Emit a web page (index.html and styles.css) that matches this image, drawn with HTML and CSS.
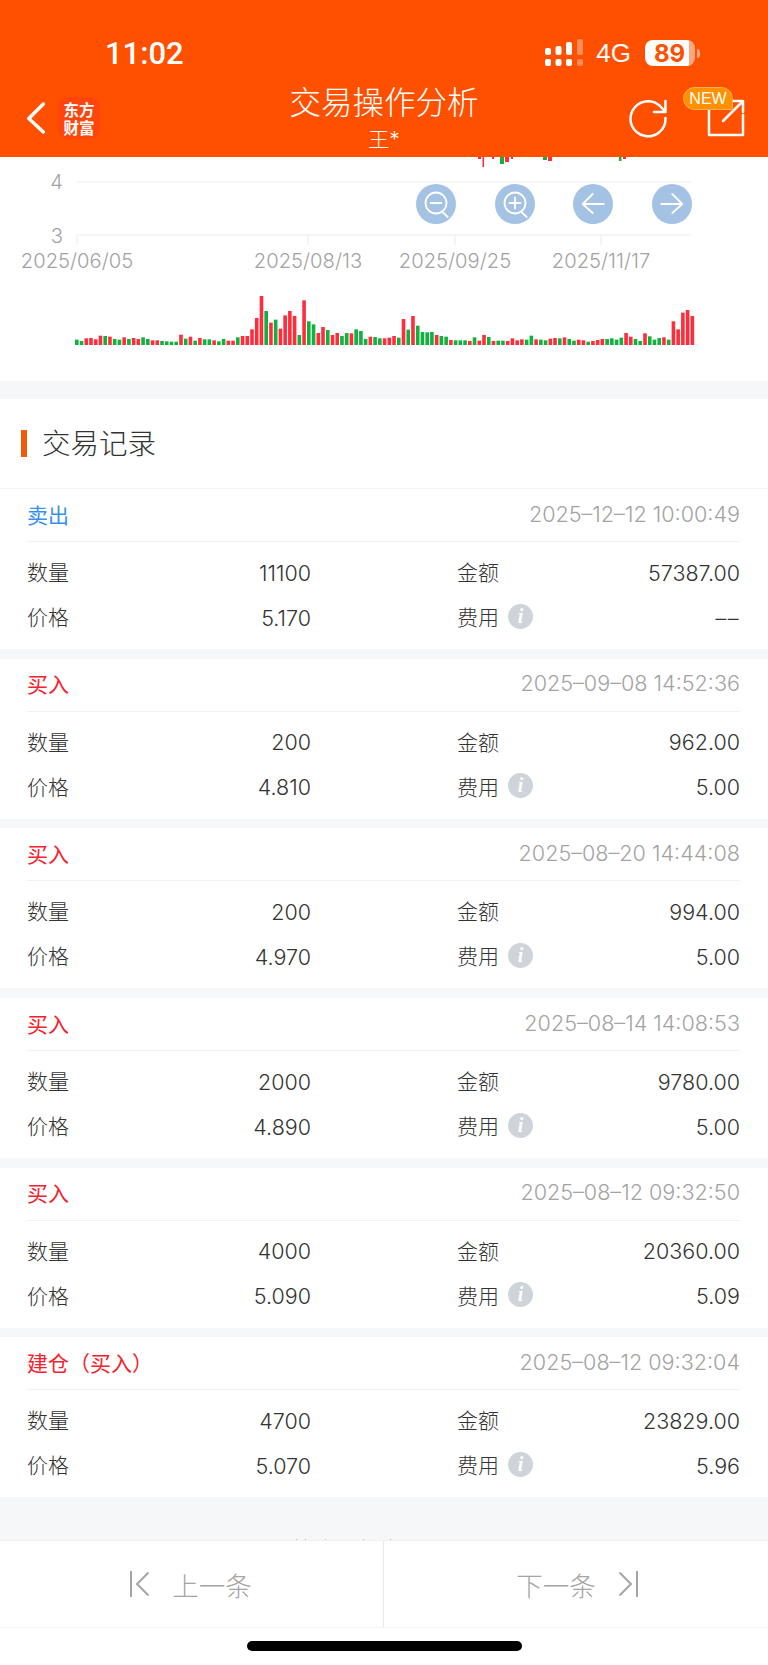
FILE: index.html
```html
<!DOCTYPE html>
<html>
	<head>
		<meta charset="UTF-8">
		<title>交易操作分析</title>
		<link rel="stylesheet" href="styles.css">
	</head>
	<body>
		<div class="page">
			<header class="header">
				<div class="status">
					<span class="time">11:02</span>
					<div class="status-right">
						<svg class="signal" width="40" height="28" viewBox="0 0 40 28">
							<rect x="1" y="20" width="6" height="7" rx="2"/>
							<rect x="11.5" y="20" width="6" height="7" rx="2"/>
							<rect x="22" y="20" width="6" height="7" rx="2"/>
							<rect class="dim" x="33" y="20" width="6" height="7" rx="2"/>
							<rect x="1" y="9" width="6" height="7" rx="2"/>
							<rect x="11.5" y="7" width="6" height="9" rx="2"/>
							<rect x="22" y="3" width="6" height="13" rx="2"/>
							<rect class="dim" x="33" y="0" width="6" height="16" rx="2"/>
						</svg>
						<span class="net">4G</span>
						<div class="battery"><span class="battery-num">89</span></div>
						<span class="battery-tip"></span>
					</div>
				</div>
				<div class="nav">
					<div class="nav-left">
						<svg class="back" width="18" height="32" viewBox="0 0 18 32">
							<path d="M16.300 2 L1.800 16.500 L16.300 30"/>
						</svg>
						<div class="logo">东方财富</div>
					</div>
					<div class="nav-title">
						<div class="title">交易操作分析</div>
						<div class="subtitle">王*</div>
					</div>
					<div class="nav-right">
						<svg class="nav-icon" width="40" height="40" viewBox="0 0 40 40">
							<path d="M37.500 20 A17.500 17.500 0 1 1 32 8 L37.500 14 M26 14 H37.500 V3"/>
						</svg>
						<div class="share">
							<svg class="nav-icon" width="42" height="40" viewBox="0 0 42 40">
								<path d="M38 17 V37 H4 V3 H25 M18 23 L38 3 M27 3 H38 V14"/>
							</svg>
							<span class="new">NEW</span>
						</div>
					</div>
				</div>
			</header>

			<main class="main">
				<section class="chart">
					<svg class="chart-svg" id="chart" width="768" height="224" viewBox="0 157 768 224">
						<!-- K线被标题栏盖住的部分 -->
						<g class="red">
							<rect x="478" y="157" width="3" height="2"/>
							<rect x="482.500" y="157" width="1.600" height="10"/>
							<rect x="492" y="157" width="2" height="2"/>
							<rect x="505" y="157" width="4" height="5"/>
							<rect x="511" y="157" width="2" height="2"/>
							<rect x="548" y="157" width="4" height="4"/>
							<rect x="623" y="157" width="3" height="2"/>
						</g>
						<g class="green">
							<rect x="500" y="157" width="4" height="7"/>
							<rect x="543" y="157" width="4" height="3"/>
							<rect x="619" y="157" width="2.500" height="4"/>
						</g>
						<g class="grid">
							<path d="M77 182 H691 M77 235 H691 M77 235 V245 M308 235 V245 M455 235 V245 M601 235 V245"/>
						</g>
						<text class="axis" x="63" y="189" text-anchor="end">4</text>
						<text class="axis" x="63" y="243" text-anchor="end">3</text>
						<text class="axis" x="77" y="268" text-anchor="middle">2025/06/05</text>
						<text class="axis" x="308" y="268" text-anchor="middle">2025/08/13</text>
						<text class="axis" x="455" y="268" text-anchor="middle">2025/09/25</text>
						<text class="axis" x="601" y="268" text-anchor="middle">2025/11/17</text>
					</svg>
					<div class="zoom-btns">
						<div class="zoom-btn">
							<svg width="40" height="40" viewBox="0 0 40 40"><circle cx="20" cy="19" r="10.500"/><path d="M26 27.700 L31.700 33 M14.500 19 H25.500"/></svg>
						</div>
						<div class="zoom-btn">
							<svg width="40" height="40" viewBox="0 0 40 40"><circle cx="20" cy="19" r="10.500"/><path d="M26 27.700 L31.700 33 M14.500 19 H25.500 M20 13.500 V24.500"/></svg>
						</div>
						<div class="zoom-btn">
							<svg width="40" height="40" viewBox="0 0 40 40"><path d="M9.700 20 H30.700 M19.700 10 L9.700 20 L19.700 29"/></svg>
						</div>
						<div class="zoom-btn">
							<svg width="40" height="40" viewBox="0 0 40 40"><path d="M30.300 20 H9.300 M20.300 10 L30.300 20 L20.300 29"/></svg>
						</div>
					</div>
				</section>

				<section class="records">
					<h2 class="records-title"><span>交易记录</span></h2>

					<div class="card">
						<div class="card-head">
							<span class="sell">卖出</span>
							<span class="date">2025–12–12 10:00:49</span>
						</div>
						<div class="row">
							<div class="cell"><span>数量</span><b>11100</b></div>
							<div class="cell"><span>金额</span><b>57387.00</b></div>
						</div>
						<div class="row">
							<div class="cell"><span>价格</span><b>5.170</b></div>
							<div class="cell"><span>费用<i class="info">i</i></span><b class="empty">––</b></div>
						</div>
					</div>

					<div class="card">
						<div class="card-head">
							<span class="buy">买入</span>
							<span class="date">2025–09–08 14:52:36</span>
						</div>
						<div class="row">
							<div class="cell"><span>数量</span><b>200</b></div>
							<div class="cell"><span>金额</span><b>962.00</b></div>
						</div>
						<div class="row">
							<div class="cell"><span>价格</span><b>4.810</b></div>
							<div class="cell"><span>费用<i class="info">i</i></span><b>5.00</b></div>
						</div>
					</div>

					<div class="card">
						<div class="card-head">
							<span class="buy">买入</span>
							<span class="date">2025–08–20 14:44:08</span>
						</div>
						<div class="row">
							<div class="cell"><span>数量</span><b>200</b></div>
							<div class="cell"><span>金额</span><b>994.00</b></div>
						</div>
						<div class="row">
							<div class="cell"><span>价格</span><b>4.970</b></div>
							<div class="cell"><span>费用<i class="info">i</i></span><b>5.00</b></div>
						</div>
					</div>

					<div class="card">
						<div class="card-head">
							<span class="buy">买入</span>
							<span class="date">2025–08–14 14:08:53</span>
						</div>
						<div class="row">
							<div class="cell"><span>数量</span><b>2000</b></div>
							<div class="cell"><span>金额</span><b>9780.00</b></div>
						</div>
						<div class="row">
							<div class="cell"><span>价格</span><b>4.890</b></div>
							<div class="cell"><span>费用<i class="info">i</i></span><b>5.00</b></div>
						</div>
					</div>

					<div class="card">
						<div class="card-head">
							<span class="buy">买入</span>
							<span class="date">2025–08–12 09:32:50</span>
						</div>
						<div class="row">
							<div class="cell"><span>数量</span><b>4000</b></div>
							<div class="cell"><span>金额</span><b>20360.00</b></div>
						</div>
						<div class="row">
							<div class="cell"><span>价格</span><b>5.090</b></div>
							<div class="cell"><span>费用<i class="info">i</i></span><b>5.09</b></div>
						</div>
					</div>

					<div class="card">
						<div class="card-head">
							<span class="buy">建仓（买入）</span>
							<span class="date">2025–08–12 09:32:04</span>
						</div>
						<div class="row">
							<div class="cell"><span>数量</span><b>4700</b></div>
							<div class="cell"><span>金额</span><b>23829.00</b></div>
						</div>
						<div class="row">
							<div class="cell"><span>价格</span><b>5.070</b></div>
							<div class="cell"><span>费用<i class="info">i</i></span><b>5.96</b></div>
						</div>
					</div>
				</section>
				<!-- 被底栏盖住的文字露出的一点 -->
				<svg class="clipped" width="768" height="2" viewBox="0 0 768 2">
					<rect x="296" y="0" width="1" height="1"/>
					<rect x="305" y="0" width="1" height="1"/>
					<rect x="325" y="0" width="1" height="1"/>
					<rect x="363" y="0" width="1" height="1"/>
					<rect x="390" y="0" width="1" height="1"/>
				</svg>
			</main>

			<footer class="pager">
				<div class="pager-btn prev">
					<svg width="22" height="28" viewBox="0 0 22 28"><path d="M2 1 V27 M19.500 2.500 L8 14 L19.500 25.500"/></svg>
					<span>上一条</span>
				</div>
				<div class="pager-btn next">
					<span>下一条</span>
					<svg width="22" height="28" viewBox="0 0 22 28"><path d="M20 1 V27 M2.500 2.500 L14 14 L2.500 25.500"/></svg>
				</div>
			</footer>
			<div class="home"><span class="home-bar"></span></div>
		</div>
		<script src="chart.js"></script>
	</body>
</html>
```

FILE: styles.css
```css
*{
	margin:0;padding:0;
	box-sizing:border-box;
}
body{
	width:768px;
	height:1665px;
	overflow:hidden;
	background:#fff;
	font-family:Inter,"Noto Sans CJK SC",sans-serif;
	font-weight:300;
	color:#333;
}
.page{
	height:1665px;
	display:flex;
	flex-direction:column;
}
/*顶部*/
.header{
	height:157px;
	flex:none;
	background:#ff5000;
	color:#fff;
}
.status{
	height:84px;
	padding:22px 68px 0 105px;
	display:flex;
	justify-content:space-between;
	align-items:center;
}
.time{
	font-family:Roboto,sans-serif;
	font-weight:500;
	font-size:31px;
}
.status-right{
	display:flex;
	align-items:center;
}
.signal{
	fill:#fff;
	margin-right:12px;
}
.signal .dim{
	opacity:.35;
}
.net{
	font-family:"Liberation Sans",sans-serif;
	font-weight:400;
	font-size:26px;
	margin-right:14px;
}
.battery{
	width:50px;
	height:26px;
	border-radius:8px;
	background:linear-gradient(to right,#fff 44px,rgba(255,255,255,.5) 44px);
	display:flex;
	align-items:center;
	padding-left:9px;
}
.battery-num{
	font-family:Inter,sans-serif;
	font-weight:700;
	font-size:24px;
	color:#ff5000;
}
.battery-tip{
	width:3px;
	height:9px;
	margin-left:2px;
	border-radius:0 3px 3px 0;
	background:rgba(255,255,255,.5);
}
.nav{
	height:73px;
	display:grid;
	grid-template-columns:1fr auto 1fr;
	align-items:center;
}
.nav-left{
	display:flex;
	align-items:center;
	gap:13px;
	padding-left:27px;
	margin-bottom:6px;
}
.back path{
	fill:none;
	stroke:#fff;
	stroke-width:3.500;
	stroke-linecap:round;
	stroke-linejoin:round;
}
.nav-icon path{
	fill:none;
	stroke:#fff;
	stroke-width:2.500;
	stroke-linecap:round;
	stroke-linejoin:round;
}
.logo{
	width:42px;
	height:42px;
	border-radius:10px;
	background:#ff450e;
	font-family:"Noto Sans CJK SC",sans-serif;
	font-weight:700;
	font-size:15.500px;
	line-height:18px;
	text-align:center;
	padding:3px 5px 0;
}
.nav-title{
	text-align:center;
}
.title{
	font-size:31.500px;
	line-height:38px;
	font-weight:300;
}
.subtitle{
	font-size:21px;
	line-height:36px;
	font-weight:300;
}
.nav-right{
	display:flex;
	justify-content:flex-end;
	align-items:center;
	gap:37px;
	padding-right:21px;
	margin-bottom:6px;
}
.share{
	position:relative;
	height:40px;
}
.new{
	position:absolute;
	left:-22px;
	top:-11px;
	width:50px;
	height:23px;
	border-radius:12px 12px 2px 12px;
	border:1px solid #ffb05c;
	background:#ff9100;
	font-family:"Liberation Sans",sans-serif;
	font-weight:400;
	font-size:16px;
	line-height:21px;
	text-align:center;
}
/*内容*/
.main{
	flex:1;
	min-height:0;
	overflow:hidden;
	background:#f6f7f9;
	display:flex;
	flex-direction:column;
}
.chart{
	height:224px;
	flex:none;
	background:#fff;
	position:relative;
}
.chart-svg{
	display:block;
}
.red{
	fill:#ff2d3c;
}
.green{
	fill:#12b03e;
}
.grid path{
	fill:none;
	stroke:#f2f2f2;
	stroke-width:1.500;
}
.axis{
	font-family:"Inter",sans-serif;
	font-weight:300;
	font-size:20.200px;
	fill:#a3a3a3;
}
.zoom-btns{
	position:absolute;
	left:416px;
	top:27px;
	display:flex;
	gap:38.700px;
}
.zoom-btn{
	width:40px;
	height:40px;
	border-radius:50%;
	background:#a4c2e4;
}
.zoom-btn svg{
	display:block;
}
.zoom-btn circle,.zoom-btn path{
	fill:none;
	stroke:#fff;
	stroke-width:1.800;
	stroke-linecap:round;
	stroke-linejoin:round;
}
.records{
	margin-top:18px;
	flex:none;
}
.records-title{
	height:90px;
	background:#fff;
	border-bottom:1px solid #f5f5f5;
	padding-left:21px;
	display:flex;
	align-items:center;
	font-size:28.500px;
	font-weight:300;
}
.records-title span{
	border-left:6px solid #f05a0a;
	padding-left:15px;
	line-height:27px;
}
.card{
	height:160px;
	background:#fff;
	margin-bottom:9.700px;
	padding:0 28px 0 27px;
}
.card:last-child{
	margin-bottom:0;
}
.card-head{
	height:53px;
	padding-bottom:3px;
	border-bottom:1px solid #f2f2f2;
	display:flex;
	justify-content:space-between;
	align-items:center;
	font-size:21px;
	font-weight:400;
}
.sell{
	color:#3a8fee;
}
.buy{
	color:#f5222d;
}
.date{
	color:#a3a3a3;
	font-weight:300;
	font-size:21.600px;
}
.row{
	height:45px;
	display:grid;
	grid-template-columns:284px 1fr;
	column-gap:146px;
	font-size:21px;
}
.card-head + .row{
	margin-top:8px;
}
.cell{
	display:flex;
	justify-content:space-between;
	align-items:center;
}
.cell span{
	display:flex;
	align-items:center;
	margin-bottom:3px;
}
.cell b{
	font-weight:300;
	font-size:21.500px;
}
.cell .empty{
	letter-spacing:1.500px;
}
.info{
	width:25px;
	height:25px;
	margin-left:9px;
	border-radius:50%;
	background:#cfd3da;
	color:#fff;
	font-family:"Liberation Serif",serif;
	font-weight:700;
	font-size:20px;
	line-height:25px;
	text-align:center;
}
.clipped{
	display:block;
	flex:none;
	margin-top:auto;
	fill:#bbb;
	margin-bottom:-1px;
}
/*底部*/
.pager{
	height:88px;
	flex:none;
	background:#fff;
	border-top:1px solid #f0f0f0;
	border-bottom:1px solid #f3f3f3;
	display:flex;
	color:#a5a5a5;
	position:relative;
}
.pager-btn{
	flex:1;
	display:flex;
	justify-content:center;
	align-items:center;
	gap:21px;
	font-size:26.500px;
	font-weight:300;
}
.prev{
	padding-right:2px;
}
.next{
	border-left:1px solid #e8e8e8;
	padding-left:3px;
}
.pager-btn path{
	fill:none;
	stroke:#a5a5a5;
	stroke-width:2;
}
.home{
	height:37px;
	flex:none;
	display:flex;
	justify-content:center;
	padding-top:13px;
}
.home-bar{
	width:275px;
	height:10px;
	border-radius:5px;
	background:#000;
}
```

FILE: chart.js
```js
//成交量柱 [高度, 1红 0绿]
var bars = [
	16,0,12,0,20,1,21,1,17,1,28,1,27,0,25,1,18,0,16,0,23,1,18,0,21,1,18,1,23,0,18,0,14,1,14,1,12,0,11,0,10,0,10,0,
	31,1,19,0,25,1,13,0,21,1,17,0,17,0,14,1,11,0,18,0,13,1,13,1,23,0,27,1,27,1,47,1,81,1,147,1,102,0,67,1,76,0,49,1,
	89,1,102,1,87,1,30,0,134,1,71,0,62,0,36,1,54,1,45,0,30,1,36,1,27,0,36,0,35,1,47,0,42,0,18,0,25,1,24,0,20,0,20,1,
	22,1,27,1,22,0,78,1,46,0,87,1,58,0,39,0,38,0,39,0,30,1,27,0,25,0,15,1,14,0,14,0,14,0,12,1,23,0,13,1,30,1,24,0,
	12,1,13,0,13,0,12,1,20,1,14,1,17,1,16,0,28,0,17,1,16,0,14,0,19,1,21,1,20,0,23,1,18,0,13,0,16,1,14,1,10,0,12,1,
	15,1,18,1,18,0,20,0,16,0,22,0,36,1,25,1,18,0,12,0,35,1,26,0,16,0,21,0,23,1,16,0,71,1,47,1,97,1,105,1,87,1
];
var chart = document.getElementById('chart');
var base = 345;
for(var i = 0; i < bars.length; i += 2){
	var h = bars[i] / 3;
	var rect = document.createElementNS('http://www.w3.org/2000/svg','rect');
	rect.setAttribute('x',75 + (i / 2) * 4.735);
	rect.setAttribute('y',base - h);
	rect.setAttribute('width',3.6);
	rect.setAttribute('height',h);
	rect.setAttribute('class',bars[i + 1] ? 'red' : 'green');
	chart.appendChild(rect);
}
```
